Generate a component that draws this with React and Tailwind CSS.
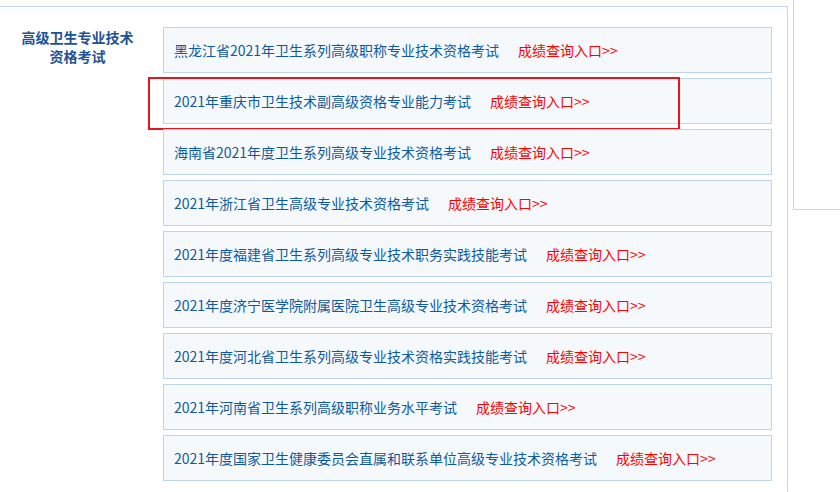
import React from 'react';

const exams = [
  '黑龙江省2021年卫生系列高级职称专业技术资格考试',
  '2021年重庆市卫生技术副高级资格专业能力考试',
  '海南省2021年度卫生系列高级专业技术资格考试',
  '2021年浙江省卫生高级专业技术资格考试',
  '2021年度福建省卫生系列高级专业技术职务实践技能考试',
  '2021年度济宁医学院附属医院卫生高级专业技术资格考试',
  '2021年度河北省卫生系列高级专业技术资格实践技能考试',
  '2021年河南省卫生系列高级职称业务水平考试',
  '2021年度国家卫生健康委员会直属和联系单位高级专业技术资格考试',
];

export default function App() {
  return (
    <div
      className="w-[840px] h-[492px] overflow-hidden bg-white flex gap-[5px] text-[14px]"
      style={{ fontFamily: '"Noto Sans CJK SC", "Noto Sans", sans-serif' }}
    >
      <div className="w-[788px] shrink-0 mt-[6px] border-t border-r border-[#c3d8ec] flex">
        <div className="w-[155px] shrink-0 pt-[21px] text-center font-bold text-[#1d5296] leading-[19px]">
          高级卫生专业技术
          <br />
          资格考试
        </div>
        <div className="ml-[8px] w-[609px] pt-[20px] flex flex-col gap-[5px]">
          {exams.map((name, i) => (
            <div
              key={name}
              className="relative h-[46px] border border-[#bed5ea] bg-[#f5f9fc] flex items-center pl-[10px]"
            >
              <a href="#" className="text-[#0f5a9e] whitespace-nowrap">{name}</a>
              <a href="#" className="ml-[19px] text-[#ff0000] whitespace-nowrap">成绩查询入口&gt;&gt;</a>
              {i === 1 && (
                <div className="absolute left-[-16px] top-[-2px] w-[532px] h-[53px] border-2 border-[#e8161c] pointer-events-none" />
              )}
            </div>
          ))}
        </div>
      </div>
      <div className="flex-1 h-[210px] border-l border-b border-[#c3d8ec]" />
    </div>
  );
}
